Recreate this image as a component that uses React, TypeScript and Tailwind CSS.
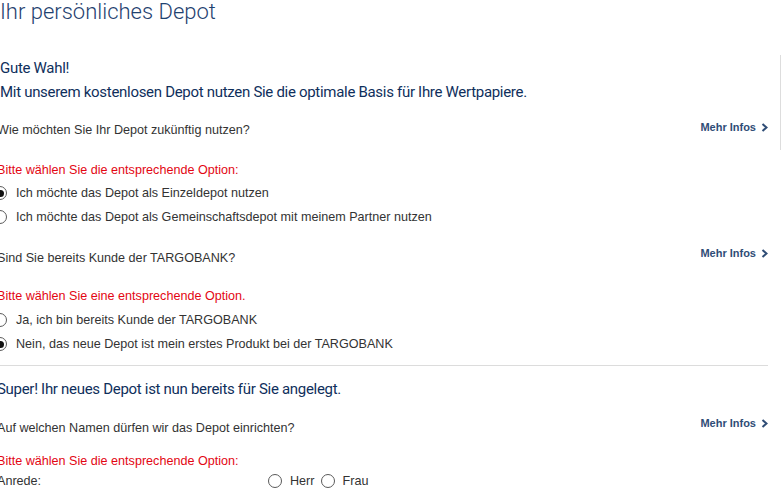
import React from 'react';

const BODY = { fontFamily: '"Liberation Sans", Arial, sans-serif' };
const HEAD = { fontFamily: 'Roboto, "Noto Sans", sans-serif' };

const Chevron: React.FC = () => (
  <svg width="7" height="9" viewBox="0 0 7 9" fill="none" className="ml-[5px]">
    <path d="M1.5 1L5.5 4.5L1.5 8" stroke="currentColor" strokeWidth="2" />
  </svg>
);

const MehrInfos: React.FC = () => (
  <a className="flex items-center text-[11px] font-bold leading-[20px] text-[#2f4d76] cursor-pointer" style={BODY}>
    Mehr Infos
    <Chevron />
  </a>
);

const Radio: React.FC<{ checked?: boolean; label: string; first?: boolean }> = ({ checked, label, first }) => (
  <label className="flex items-center h-[24px]">
    <span
      className={
        'w-[14px] h-[14px] rounded-full border border-[#5a5a5a] bg-white flex items-center justify-center shrink-0 ' +
        (first ? '-ml-[4px]' : '')
      }
    >
      {checked && <span className="w-[7px] h-[7px] rounded-full bg-[#111]" />}
    </span>
    <span className={first ? 'ml-[9px]' : 'ml-[8px]'}>{label}</span>
  </label>
);

const Question: React.FC<{ text: string; pad: string; className?: string }> = ({ text, pad, className }) => (
  <div className={'flex justify-between items-start ' + (className || '')}>
    <p className={'leading-[20px] ' + pad}>{text}</p>
    <MehrInfos />
  </div>
);

export default function App() {
  return (
    <div className="flex bg-white w-[783px] h-[492px] overflow-hidden">
      <div className="w-[771px] -ml-[3px] shrink-0 text-[12.6px] text-[#333]" style={BODY}>
        <h1 className="ml-[3px] h-[24px] text-[22px] leading-[24px] font-light text-[#1f4270]" style={HEAD}>
          Ihr persönliches Depot
        </h1>

        <div className="ml-[3px] text-[15px] tracking-[-0.3px] text-[#0f2f5c]" style={HEAD}>
          <p className="mt-[34px] leading-[20px]">Gute Wahl!</p>
          <p className="mt-[4px] leading-[20px]">
            Mit unserem kostenlosen Depot nutzen Sie die optimale Basis für Ihre Wertpapiere.
          </p>
        </div>

        <Question className="mt-[15px]" pad="pt-[3px]" text="Wie möchten Sie Ihr Depot zukünftig nutzen?" />
        <p className="mt-[21px] leading-[18px] text-[#e30613]">Bitte wählen Sie die entsprechende Option:</p>
        <div className="mt-[2px]">
          <Radio first checked label="Ich möchte das Depot als Einzeldepot nutzen" />
          <Radio first label="Ich möchte das Depot als Gemeinschaftsdepot mit meinem Partner nutzen" />
        </div>

        <Question className="mt-[14px]" pad="pt-[5px]" text="Sind Sie bereits Kunde der TARGOBANK?" />
        <p className="mt-[19px] leading-[18px] text-[#e30613]">Bitte wählen Sie eine entsprechende Option.</p>
        <div className="mt-[3px]">
          <Radio first label="Ja, ich bin bereits Kunde der TARGOBANK" />
          <Radio first checked label="Nein, das neue Depot ist mein erstes Produkt bei der TARGOBANK" />
        </div>

        <div className="mt-[9px] ml-[3px] border-t border-[#dcdcdc]" />

        <p className="mt-[13px] text-[15px] tracking-[-0.3px] leading-[20px] text-[#0f2f5c]" style={HEAD}>
          Super! Ihr neues Depot ist nun bereits für Sie angelegt.
        </p>

        <Question className="mt-[14px]" pad="pt-[5px]" text="Auf welchen Namen dürfen wir das Depot einrichten?" />
        <p className="mt-[14px] leading-[18px] text-[#e30613]">Bitte wählen Sie die entsprechende Option:</p>
        <div className="mt-[1px] flex items-center h-[20px]">
          <span className="w-[271px] shrink-0">Anrede:</span>
          <Radio label="Herr" />
          <span className="ml-[6px]">
            <Radio label="Frau" />
          </span>
        </div>
      </div>
      <div className="ml-[12px] mt-[55px] w-px h-[95px] bg-[#dddddd] shrink-0" />
    </div>
  );
}
